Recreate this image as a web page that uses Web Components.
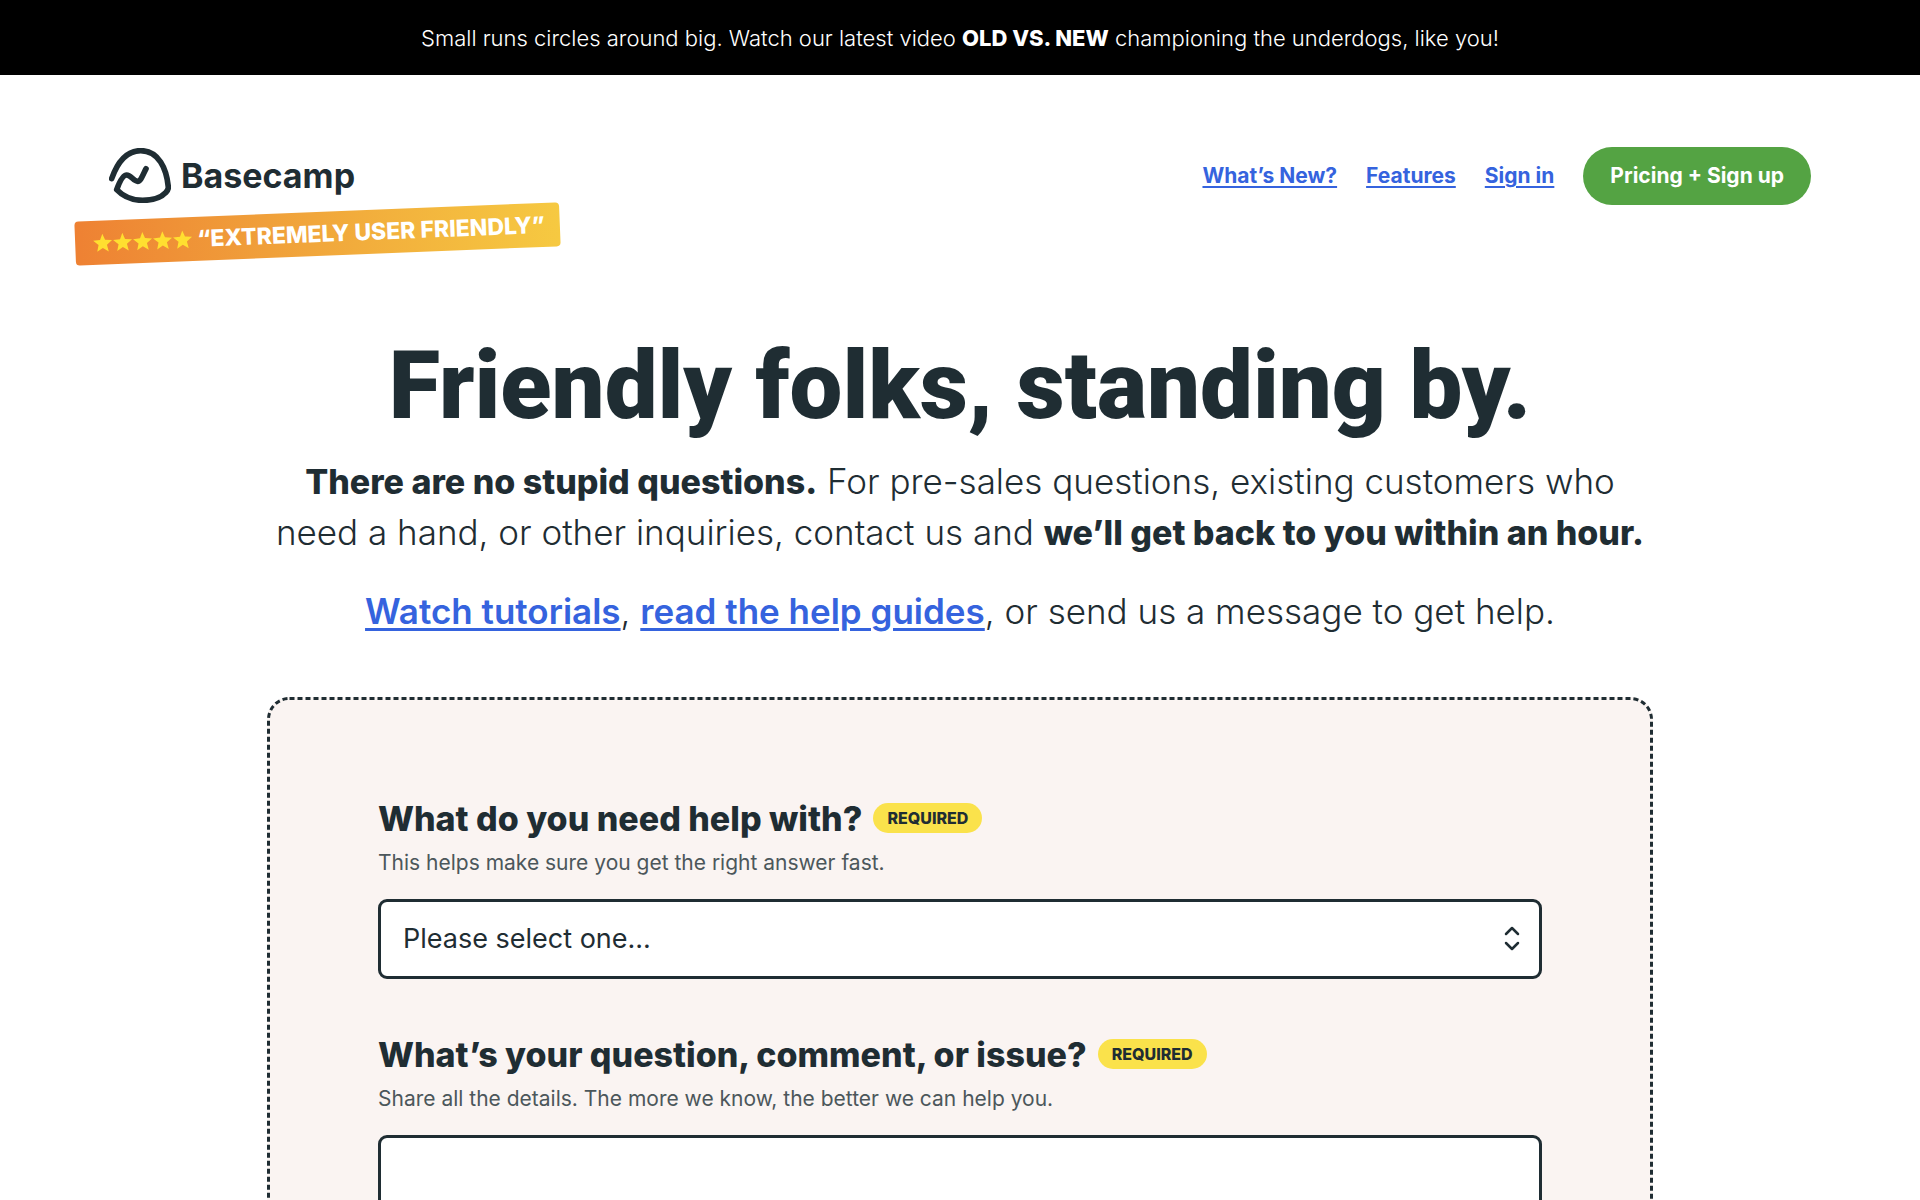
<!DOCTYPE html>
<html lang="en">
<head>
<meta charset="utf-8">
<title>Basecamp Support</title>
<style>
  :root {
    --ink: #1f2d33;
    --muted: #4c575b;
    --blue: #3563de;
    --green: #54a343;
    --yellow: #fae24b;
    --sand: #faf4f2;
  }
  body {
    margin: 0;
    background: #fff;
    color: var(--ink);
    font-family: Inter, "Liberation Sans", sans-serif;
  }
</style>
</head>
<body>
<support-page></support-page>

<template id="support-page">
  <style>
    :host { display: block; }
    main { display: flex; flex-direction: column; align-items: center; padding: 0 109px 100px; }
    contact-card { align-self: stretch; margin: 60px 158px 0; }
  </style>
  <promo-banner>Small runs circles around big. Watch our latest video <strong slot="title">OLD VS. NEW</strong><span slot="rest">championing the underdogs, like you!</span></promo-banner>
  <site-header></site-header>
  <main>
    <page-intro></page-intro>
    <contact-card>
      <form-field kind="select" placeholder="Please select one...">
        What do you need help with?
        <span slot="hint">This helps make sure you get the right answer fast.</span>
      </form-field>
      <form-field kind="textarea">
        What’s your question, comment, or issue?
        <span slot="hint">Share all the details. The more we know, the better we can help you.</span>
      </form-field>
    </contact-card>
  </main>
</template>

<template id="promo-banner">
  <style>
    :host { display: block; background: #000; color: #fff; }
    p { margin: 0; padding: 23px 24px 22px; text-align: center; font-size: 22px; font-weight: 300; line-height: 30px; }
    ::slotted(strong) { font-weight: 800; }
  </style>
  <p><slot></slot><slot name="title"></slot> <slot name="rest"></slot></p>
</template>

<template id="site-header">
  <style>
    :host { display: block; }
    header { display: flex; justify-content: space-between; align-items: flex-start; padding: 72px 109px 0; }
    .brand { display: flex; flex-direction: column; gap: 8px; }
    nav { display: flex; align-items: center; gap: 29px; font-size: 21px; font-weight: 700; line-height: 28px; }
    a { color: var(--blue); text-decoration-thickness: 2px; text-underline-offset: 3px; }
    a.button { display: block; padding: 15px 27px; border-radius: 29px; background: var(--green); color: #fff; text-decoration: none; }
    user-quote { margin-left: -34px; }
  </style>
  <header>
    <div class="brand">
      <brand-logo>Basecamp</brand-logo>
      <user-quote>“EXTREMELY USER FRIENDLY”</user-quote>
    </div>
    <nav aria-label="Main">
      <a href="#new">What’s New?</a>
      <a href="#features">Features</a>
      <a href="#signin">Sign in</a>
      <a class="button" href="#pricing">Pricing + Sign up</a>
    </nav>
  </header>
</template>

<template id="brand-logo">
  <style>
    :host { display: block; }
    a { display: flex; align-items: center; gap: 10px; height: 57px; color: inherit; text-decoration: none; font-size: 34px; font-weight: 700; line-height: 44px; }
    svg { width: 62px; height: 55px; }
  </style>
  <a href="#home">
    <svg viewBox="57 38 186 165" fill="none" stroke="currentColor" stroke-width="17" stroke-linecap="round" stroke-linejoin="round" aria-hidden="true">
      <path d="M65 130C84 76 112 46 152 46C206 46 230 100 235 156C235 164 232 167 227 172C213 187 189 195 158 195C124 195 98 182 80 163C88 141 98 119 110 119C123 119 131 138 143 138C152 138 159 118 168 100"/>
    </svg>
    <slot></slot>
  </a>
</template>

<template id="user-quote">
  <style>
    :host { display: block; }
    p { display: flex; align-items: center; gap: 5px; box-sizing: border-box; width: 485px; height: 44px; margin: 0; padding: 0 18px; border-radius: 4px; background: linear-gradient(to right, #ee8133, #f0a03a 40%, #f6c941); color: #fff; font-size: 23px; font-weight: 800; line-height: 30px; white-space: nowrap; transform: rotate(-2.3deg); }
    svg { flex: none; width: 99px; height: 19px; fill: #ffdf30; }
  </style>
  <p>
    <svg viewBox="0 0 99 19" role="img" aria-label="Five stars">
      <defs><path id="star" d="M9.5 0L12 6.2L19 6.8L13.700 11.200L15.300 18L9.500 14.300L3.700 18L5.300 11.200L0 6.800L7 6.200Z"/></defs>
      <use href="#star"/><use href="#star" x="20"/><use href="#star" x="40"/><use href="#star" x="60"/><use href="#star" x="80"/>
    </svg>
    <slot></slot>
  </p>
</template>

<template id="page-intro">
  <style>
    :host { display: block; max-width: 1386px; text-align: center; }
    h1 { margin: 82px 0 22px; font-family: Roboto, "Liberation Sans", sans-serif; font-size: 94px; font-weight: 900; line-height: 96px; }
    p { margin: 0; font-size: 35px; font-weight: 300; line-height: 51px; }
    p + p { margin-top: 28px; }
    strong { font-size: 34px; font-weight: 800; }
    a { color: var(--blue); font-weight: 600; text-decoration-thickness: 3px; text-underline-offset: 4px; }
  </style>
  <h1>Friendly folks, standing by.</h1>
  <p><strong>There are no stupid questions.</strong> For pre-sales questions, existing customers who <wbr>need a hand, or other inquiries, contact us and <strong>we’ll get back to you within an hour.</strong></p>
  <p><a href="#tutorials">Watch tutorials</a>, <a href="#guides">read the help guides</a>, or send us a message to get help.</p>
</template>

<template id="contact-card">
  <style>
    :host { display: block; position: relative; border-radius: 22px; background: var(--sand); }
    svg { position: absolute; inset: 0; width: 100%; height: 100%; pointer-events: none; }
    rect { width: calc(100% - 3px); height: calc(100% - 3px); fill: none; stroke: var(--ink); stroke-width: 3; stroke-dasharray: 5 3; }
    form { display: flex; flex-direction: column; gap: 54px; padding: 100px 111px; }
  </style>
  <svg aria-hidden="true"><rect x="1.5" y="1.5" rx="21"/></svg>
  <form><slot></slot></form>
</template>

<template id="form-field">
  <style>
    :host { display: block; }
    .head { display: flex; align-items: center; gap: 11px; }
    label { font-size: 34px; font-weight: 800; line-height: 44px; }
    .badge { margin-bottom: 3px; padding: 0 14px; border-radius: 15px; background: var(--yellow); font-size: 16px; font-weight: 800; line-height: 30px; }
    .hint { margin: 7px 0 21px; color: var(--muted); font-size: 21px; line-height: 30px; }
    .box { display: grid; align-items: center; }
    .box > * { grid-area: 1 / 1; }
    select, textarea { box-sizing: border-box; width: 100%; border: 3px solid var(--ink); border-radius: 9px; background: #fff; color: var(--ink); font: 400 27px/36px Inter, "Liberation Sans", sans-serif; }
    select { appearance: none; height: 80px; padding: 0 56px 0 22px; }
    textarea { display: block; height: 240px; padding: 20px 22px; resize: none; }
    svg { justify-self: end; width: 16px; height: 26px; margin-right: 22px; fill: none; stroke: var(--ink); stroke-width: 2.5; stroke-linecap: round; stroke-linejoin: round; pointer-events: none; }
  </style>
  <div class="head"><label for="control"><slot></slot></label><span class="badge">REQUIRED</span></div>
  <p class="hint" id="hint"><slot name="hint"></slot></p>
  <div class="box"></div>
</template>

<script>
  class TemplateElement extends HTMLElement {
    constructor() {
      super();
      const template = document.getElementById(this.localName);
      this.attachShadow({ mode: "open" }).append(template.content.cloneNode(true));
    }
  }

  class FormField extends TemplateElement {
    connectedCallback() {
      const kind = this.getAttribute("kind");
      const box = this.shadowRoot.querySelector(".box");
      const control = document.createElement(kind);
      control.id = "control";
      control.required = true;
      control.setAttribute("aria-describedby", "hint");
      box.replaceChildren(control);
      if (kind === "select") {
        control.add(new Option(this.getAttribute("placeholder"), ""));
        box.insertAdjacentHTML("beforeend",
          '<svg viewBox="0 0 16 26" aria-hidden="true"><path d="M2 8L8 2L14 8M2 17L8 23L14 17"/></svg>');
      }
    }
  }

  customElements.define("form-field", FormField);
  for (const name of ["contact-card", "page-intro", "user-quote", "brand-logo", "site-header", "promo-banner", "support-page"]) {
    customElements.define(name, class extends TemplateElement {});
  }
</script>
</body>
</html>
